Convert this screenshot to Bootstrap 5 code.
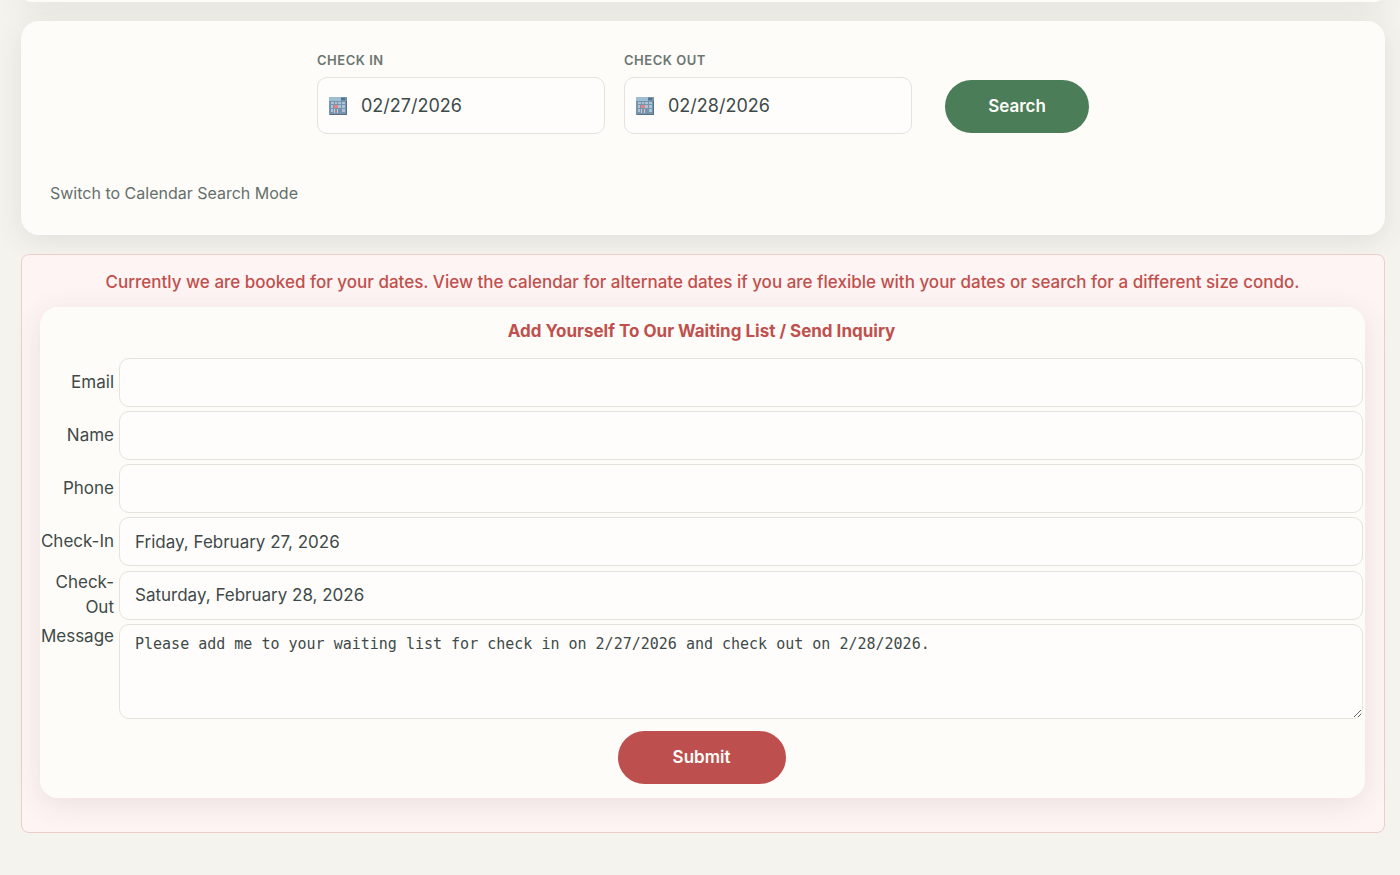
<!DOCTYPE html>
<html lang="en">
<head>
<meta charset="utf-8">
<meta name="viewport" content="width=device-width, initial-scale=1">
<title>Condo availability</title>
<link href="https://cdn.jsdelivr.net/npm/bootstrap@5.3.0/dist/css/bootstrap.min.css" rel="stylesheet">
<style>
  body { background: #f4f3ee; color: #3f4a48; font-family: Inter, sans-serif; font-size: 16px; line-height: 25px; }
  .page { padding: 0 15px 42px 21px; overflow: hidden; }
  .panel { background: #fdfcf8; border-radius: 18px; box-shadow: 0 6px 28px rgba(60, 60, 45, .1); }
  .panel-end { height: 20px; margin-top: -18px; }
  .search-panel { padding: 29px; margin: 19px 0; }
  .search-row { gap: 19px; }
  .field-label { font-size: 13px; line-height: 20px; font-weight: 600; letter-spacing: .5px; color: #6c7672; margin-bottom: 7px; }
  .date-box { width: 288px; }
  .form-control, .form-control:focus { background-color: #fefdfc; border: 1px solid #e4e3dc; border-radius: 10px; color: #3f4a48; }
  .date-input { height: 57px; padding: 0 16px 0 43px; font-size: 18px; }
  .date-icon { left: 12px; top: 20px; pointer-events: none; }
  .pill { height: 53px; border-radius: 27px; font-size: 17px; font-weight: 600; color: #fdfcf8; border: 0; }
  .pill-search { width: 144px; background: #4b7e58; margin: 0 0 1px 14px; }
  .pill-submit { width: 168px; background: #bd504e; }
  .pill-search:hover { background: #3f6d4b; color: #fff; }
  .pill-submit:hover { background: #a84341; color: #fff; }
  .mode-link { color: #65706c; margin-top: 47px; }
  .notice { background: #fef4f3; border: 1px solid #edcdca; border-radius: 8px; padding: 15px 19px 34px 18px; }
  .notice-text, .form-title { color: #c0504d; font-size: 17px; line-height: 25px; }
  .notice-text { margin-bottom: 12px; }
  .form-title { margin-bottom: 14px; }
  .inquiry { padding: 12px 2px 14px 0; }
  .line { display: grid; grid-template-columns: 74px 1fr; column-gap: 5px; align-items: center; margin-bottom: 4px; }
  .line label { text-align: right; font-size: 17px; }
  .line .form-control { height: 49px; padding: 0 15px; font-size: 17px; }
  .line textarea.form-control { height: 95px; padding: 7px 15px; font: 15px/24px "DejaVu Sans Mono", monospace; }
</style>
</head>
<body>
<main class="page">
  <div class="panel panel-end"></div>

  <form class="panel search-panel" id="search">
    <div class="search-row d-flex flex-wrap justify-content-center align-items-end">
      <div class="date-box">
        <label class="field-label d-block" for="in">CHECK IN</label>
        <div class="position-relative">
          <svg class="date-icon position-absolute" width="18" height="18" viewBox="0 0 18 18" aria-hidden="true">
            <path fill="#7695ac" d="M0 0h18v18H0z"/><path fill="#9dbdd3" d="M0 0h12v4H0z"/><path fill="#56718a" d="M12 1h4v2h-4zM1 17h17v1H1zM17 4h1v13h-1z"/>
            <path fill="#acc4d5" d="M2 5h3v2H2zM6 5h2v2H6zM9 5h3v2H9zM13 5h3v2h-3zM2 8h2v3H2zM9 8h3v3H9zM13 8h3v3h-3zM2 12h2v3H2zM13 12h3v3h-3z"/>
            <path fill="#df8388" d="M5 8h4v3H5z"/><path fill="#d8c8cf" d="M5 12h1v4H5zM8 12h1v4H8z"/>
          </svg>
          <input class="form-control date-input" id="in" type="text" value="02/27/2026">
        </div>
      </div>
      <div class="date-box">
        <label class="field-label d-block" for="out">CHECK OUT</label>
        <div class="position-relative">
          <svg class="date-icon position-absolute" width="18" height="18" viewBox="0 0 18 18" aria-hidden="true">
            <path fill="#7695ac" d="M0 0h18v18H0z"/><path fill="#9dbdd3" d="M0 0h12v4H0z"/><path fill="#56718a" d="M12 1h4v2h-4zM1 17h17v1H1zM17 4h1v13h-1z"/>
            <path fill="#acc4d5" d="M2 5h3v2H2zM6 5h2v2H6zM9 5h3v2H9zM13 5h3v2h-3zM2 8h2v3H2zM9 8h3v3H9zM13 8h3v3h-3zM2 12h2v3H2zM13 12h3v3h-3z"/>
            <path fill="#df8388" d="M5 8h4v3H5z"/><path fill="#d8c8cf" d="M5 12h1v4H5zM8 12h1v4H8z"/>
          </svg>
          <input class="form-control date-input" id="out" type="text" value="02/28/2026">
        </div>
      </div>
      <button class="btn pill pill-search" type="submit">Search</button>
    </div>
    <a class="mode-link d-inline-block text-decoration-none" href="#calendar">Switch to Calendar Search Mode</a>
  </form>

  <section class="notice text-center">
    <p class="notice-text fw-medium">Currently we are booked for your dates. View the calendar for alternate dates if you are flexible with your dates or search for a different size condo.</p>
    <form class="panel inquiry">
      <h2 class="form-title fw-bold">Add Yourself To Our Waiting List / Send Inquiry</h2>
      <div class="line"><label for="email">Email</label><input class="form-control" id="email" type="email"></div>
      <div class="line"><label for="name">Name</label><input class="form-control" id="name" type="text"></div>
      <div class="line"><label for="phone">Phone</label><input class="form-control" id="phone" type="tel"></div>
      <div class="line"><label for="arrive">Check-In</label><input class="form-control" id="arrive" type="text" value="Friday, February 27, 2026"></div>
      <div class="line"><label for="leave">Check-Out</label><input class="form-control" id="leave" type="text" value="Saturday, February 28, 2026"></div>
      <div class="line align-items-start"><label for="message">Message</label><textarea class="form-control" id="message">Please add me to your waiting list for check in on 2/27/2026 and check out on 2/28/2026.</textarea></div>
      <button class="btn pill pill-submit mt-2" type="submit">Submit</button>
    </form>
  </section>
</main>
<script src="https://cdn.jsdelivr.net/npm/bootstrap@5.3.0/dist/js/bootstrap.bundle.min.js"></script>
</body>
</html>
